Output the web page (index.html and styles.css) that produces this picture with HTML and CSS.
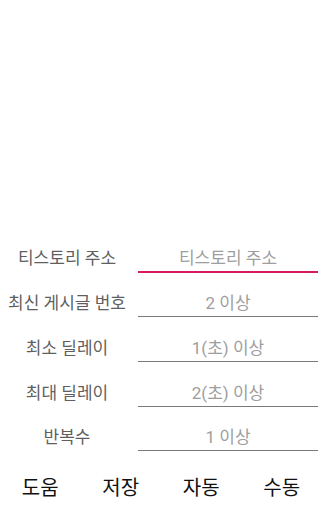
FILE: index.html
```html
<!DOCTYPE html>
<html lang="ko">
<head>
<meta charset="utf-8">
<link rel="stylesheet" href="styles.css">
</head>
<body>
<div class="app">
  <div class="form">
    <div class="row">
      <div class="label">티스토리 주소</div>
      <div class="field focused"><span class="hint">티스토리 주소</span></div>
    </div>
    <div class="row">
      <div class="label">최신 게시글 번호</div>
      <div class="field"><span class="hint">2 이상</span></div>
    </div>
    <div class="row">
      <div class="label">최소 딜레이</div>
      <div class="field"><span class="hint">1(초) 이상</span></div>
    </div>
    <div class="row">
      <div class="label">최대 딜레이</div>
      <div class="field"><span class="hint">2(초) 이상</span></div>
    </div>
    <div class="row">
      <div class="label">반복수</div>
      <div class="field"><span class="hint">1 이상</span></div>
    </div>
  </div>
  <div class="buttons">
    <div class="btn">도움</div>
    <div class="btn">저장</div>
    <div class="btn">자동</div>
    <div class="btn">수동</div>
  </div>
</div>
</body>
</html>
```
FILE: styles.css
```css
html, body {
  margin: 0;
  padding: 0;
  background: #ffffff;
}
body {
  font-family: Roboto, "Noto Sans CJK KR", sans-serif;
}
.app {
  width: 322px;
  height: 512px;
  display: flex;
  flex-direction: column;
  justify-content: flex-end;
}
.form {
  display: flex;
  flex-direction: column;
}
.row {
  display: flex;
  height: 44.75px;
}
.label {
  width: 134px;
  box-sizing: border-box;
  padding-top: 11px;
  height: 34px;
  line-height: 20px;
  font-size: 17px;
  color: #5f5f5f;
  text-align: center;
  white-space: nowrap;
}
.field {
  flex: 1;
  margin: 0 4px;
  box-sizing: content-box;
  padding-top: 11px;
  padding-bottom: 3px;
  height: 20px;
  line-height: 20px;
  font-size: 17px;
  text-align: center;
  border-bottom: 1px solid #7a7a7a;
  white-space: nowrap;
}
.field.focused {
  border-bottom: 2px solid #d81b60;
}
.hint {
  color: #9e9e9e;
}
.buttons {
  display: flex;
  height: 51px;
}
.btn {
  flex: 1;
  display: flex;
  align-items: center;
  justify-content: center;
  font-size: 20px;
  color: #111111;
}
```
